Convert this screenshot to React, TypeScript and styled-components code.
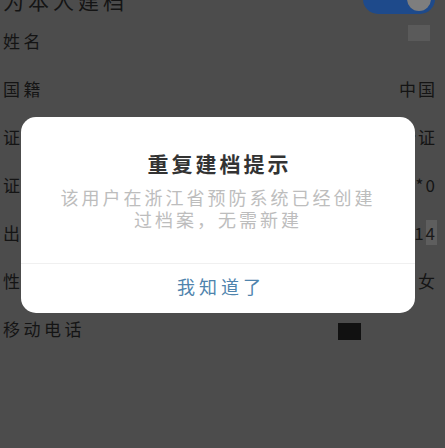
import React from "react";
import styled, { createGlobalStyle } from "styled-components";

const Global = createGlobalStyle`
  html, body { margin: 0; padding: 0; }
  body {
    width: 445px;
    height: 448px;
    overflow: hidden;
    background: #4c4c4c;
    font-family: "Noto Sans CJK SC", "Noto Sans", sans-serif;
  }
`;

const Screen = styled.div`
  position: relative;
  width: 445px;
  height: 448px;
  overflow: hidden;
  background: #4c4c4c;
`;

const Form = styled.div`
  display: flex;
  flex-direction: column;
  margin-top: -32px;
`;

const Row = styled.div<{ $big?: boolean }>`
  height: 48px;
  display: flex;
  align-items: center;
  justify-content: space-between;
  padding: 0 10px 0 3px;
  color: #141414;
  font-size: ${(p) => (p.$big ? "21px" : "17px")};
  letter-spacing: ${(p) => (p.$big ? "4px" : "3.5px")};
`;

const Label = styled.span<{ $shift?: number }>`
  line-height: 1;
  margin-top: ${(p) => p.$shift ?? 0}px;
`;

const Value = styled.span`
  line-height: 1;
  letter-spacing: 2px;
  margin-right: -2px;
`;

const Toggle = styled.div`
  width: 72px;
  height: 30px;
  border-radius: 15px;
  background: #1e4a8b;
  display: flex;
  align-items: center;
  justify-content: flex-end;
  padding: 0 4px;
  box-sizing: border-box;
  margin-top: 14px;
`;

const Knob = styled.div`
  width: 24px;
  height: 24px;
  border-radius: 50%;
  background: #7e7e7e;
`;

const Block = styled.div<{ $color: string; $w: number; $h: number; $mr: number; $mt: number }>`
  width: ${(p) => p.$w}px;
  height: ${(p) => p.$h}px;
  background: ${(p) => p.$color};
  margin-right: ${(p) => p.$mr}px;
  margin-top: ${(p) => p.$mt}px;
`;

const Shade = styled.span`
  background: #5e5e5e;
  color: #1a1a1a;
`;

const Overlay = styled.div`
  position: absolute;
  inset: 0;
  display: flex;
  flex-direction: column;
  align-items: flex-start;
  padding: 117px 0 0 21px;
  box-sizing: border-box;
`;

const Dialog = styled.div`
  width: 394px;
  background: #ffffff;
  border-radius: 15px;
  display: flex;
  flex-direction: column;
  align-items: center;
  overflow: hidden;
`;

const Title = styled.div`
  margin-top: 34px;
  font-size: 21px;
  line-height: 24px;
  font-weight: 700;
  color: #333333;
  letter-spacing: 3px;
  margin-right: -3px;
`;

const Message = styled.div`
  margin-top: 11px;
  font-size: 18px;
  line-height: 22px;
  color: #bdbdbd;
  letter-spacing: 3px;
  text-align: center;
  width: 330px;
`;

const Divider = styled.div`
  align-self: stretch;
  margin-top: 33px;
  height: 1px;
  background: #f0f0f0;
`;

const Action = styled.button`
  align-self: stretch;
  height: 49px;
  border: none;
  background: transparent;
  font-family: inherit;
  font-size: 18px;
  letter-spacing: 4px;
  color: #4f84ad;
  padding: 0 0 5px 6px;
  cursor: pointer;
`;

export default function App() {
  return (
    <Screen>
      <Global />
      <Form>
        <Row $big>
          <Label $shift={16}>为本人建档</Label>
          <Toggle>
            <Knob />
          </Toggle>
        </Row>
        <Row>
          <Label>姓名</Label>
          <Block $color="#5a5a5a" $w={22} $h={16} $mr={5} $mt={-14} />
        </Row>
        <Row>
          <Label>国籍</Label>
          <Value>中国</Value>
        </Row>
        <Row>
          <Label>证件类型</Label>
          <Value>身份证</Value>
        </Row>
        <Row>
          <Label>证件号码</Label>
          <Value>3301**********0</Value>
        </Row>
        <Row>
          <Label>出生日期</Label>
          <Value>
            1<Shade>4</Shade>
          </Value>
        </Row>
        <Row>
          <Label>性别</Label>
          <Value>女</Value>
        </Row>
        <Row>
          <Label>移动电话</Label>
          <Block $color="#111111" $w={23} $h={17} $mr={74} $mt={6} />
        </Row>
      </Form>
      <Overlay>
        <Dialog>
          <Title>重复建档提示</Title>
          <Message>该用户在浙江省预防系统已经创建过档案，无需新建</Message>
          <Divider />
          <Action>我知道了</Action>
        </Dialog>
      </Overlay>
    </Screen>
  );
}
